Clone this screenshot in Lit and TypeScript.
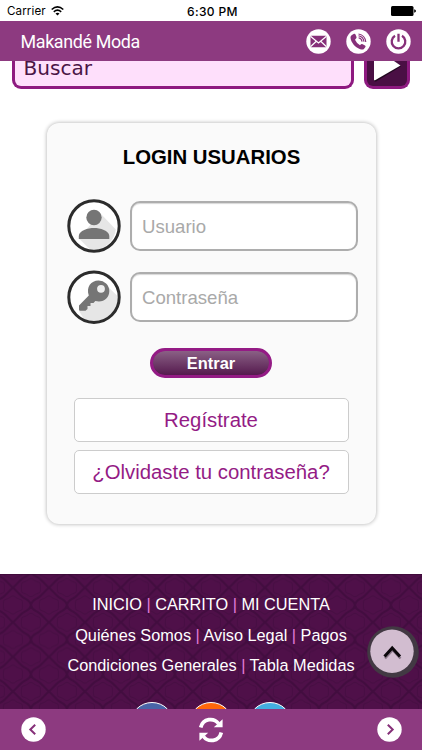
import { LitElement, html, css } from "lit";
import { customElement } from "lit/decorators.js";

@customElement("app-root")
export class AppRoot extends LitElement {
  static styles = css`
    * { box-sizing: border-box; }
    :host {
      display: flex; flex-direction: column; position: relative;
      width: 422px; height: 750px; overflow: hidden; background: #fff;
      font-family: "Liberation Sans", Arial, sans-serif; color: #000;
    }
    svg { display: block; flex: none; }
    .status {
      flex: none; height: 21px; display: grid; grid-template-columns: 1fr 1fr 1fr;
      align-items: center; padding: 0 6px 0 7px; font: 500 12px/21px Inter, sans-serif;
    }
    .carrier { display: flex; align-items: center; gap: 5px; font-weight: 400; font-size: 11.6px; letter-spacing: .1px; }
    .time { text-align: center; letter-spacing: .35px; white-space: nowrap; padding: 1px 0 0 2px; }
    .carrier span { padding-top: 1px; }
    .battery { justify-self: end; }
    .bar { flex: none; height: 40px; background: #8d3a80; display: flex; align-items: center; padding: 0 11px 0 20.5px; color: #fff; }
    .title { flex: 1; font: 400 17.9px/41px Roboto, sans-serif; letter-spacing: -.35px; }
    .tools { display: flex; gap: 15px; }
    .search { flex: none; height: 28px; display: flex; align-items: flex-start; padding: 0 12px; justify-content: space-between; }
    .query {
      width: 342px; height: 28px; border: 3px solid #8e1a80; border-top: 0; border-radius: 0 0 9px 9px;
      background: #fedffb; color: #4a1545; font: 20.1px/24px "DejaVu Sans", sans-serif; padding-left: 8.5px; overflow: hidden;
    }
    .query span { display: block; margin-top: -5px; }
    .go { width: 46px; height: 28px; border: 3px solid #8e1a80; border-top: 0; border-radius: 0 0 9px 9px; background: #4a0f44; }
    .card {
      flex: none; margin: 34px 46px 50px 47px; height: 401px; border-radius: 12px; background: #fafafa;
      box-shadow: 0 0 4px rgba(0,0,0,.33); display: flex; flex-direction: column; align-items: center;
    }
    h1 { margin: 22px 0 0; font-size: 20.35px; line-height: 24px; font-weight: 700; white-space: nowrap; }
    .row { display: flex; align-items: flex-start; gap: 9px; width: 291px; height: 55px; margin-left: 2px; }
    .row.user { margin-top: 30px; }
    .row.pass { margin-top: 16px; }
    .field {
      width: 227.5px; height: 50px; margin-top: 2px; border: 2px solid #adadad; border-radius: 10px; background: #fff;
      box-shadow: inset 0 1px 1px rgba(0,0,0,.16); color: #a9a9a9; font-size: 18.6px; line-height: 47px; padding-left: 10px;
    }
    .enter {
      width: 122px; height: 30px; margin: 23px 1px 0 0; border: 3px solid #941b85; border-radius: 15px;
      background: linear-gradient(#8a6085, #551a4e) padding-box, #941b85; color: #fff; font: 700 16.4px/25px "Liberation Sans", sans-serif;
      text-align: center;
    }
    .link {
      width: 275px; height: 44px; margin-right: 1px; border: 1px solid #ccc; border-radius: 5px; background: #fff;
      color: #941b85; font-size: 20.35px; line-height: 42px; text-align: center; white-space: nowrap;
    }
    .link.first { margin-top: 20px; }
    .link.second { margin-top: 8px; }
    .footer { flex: none; height: 135px; background: #4f1049; display: grid; overflow: hidden; }
    .footer > * { grid-area: 1 / 1; }
    .menu { display: flex; flex-direction: column; align-items: center; padding-top: 15px; color: #fff; font-size: 16.3px; line-height: 30.7px; white-space: nowrap; }
    .menu i { font-style: normal; color: #e07bd8; }
    .social { display: flex; justify-content: center; gap: 15px; margin-top: 20.5px; height: 22px; }
    .disc { width: 44px; height: 44px; flex: none; border: 1.5px solid #fff; border-radius: 50%; }
    .blue { background: #4964a8; } .orange { background: #ff670a; } .sky { background: #43aee0; }
    .nav { flex: none; height: 41px; background: #8d3a80; display: flex; align-items: center; justify-content: space-between; padding: 0 20.5px; }
    .top { position: absolute; left: 366px; top: 625px; }
  `;

  pattern() {
    return html`<svg width="422" height="135" viewBox="0 0 422 135">
      <defs>
        <pattern id="ogee" width="36" height="34.6" patternUnits="userSpaceOnUse" patternTransform="translate(12.9 -3.6)">
          <g fill="none" stroke="#350a35">
            <path d="M18 0C19 6 23 5 27 8.6S34 16 36 17.3C34 18.6 31 22.4 27 26S19 28.6 18 34.6C17 28.6 13 29.6 9 26S2 18.6 0 17.3C2 16 5 12.2 9 8.6S17 6 18 0Z" stroke-opacity=".5" stroke-width="2.2"/>
            <path d="M18 8.3C21 8.3 21 11 24.5 11.5S27.5 14.3 27.5 17.3 28 22.6 24.5 23.1 21 26.3 18 26.3 15 23.6 11.5 23.1 8.5 20.3 8.5 17.3 8 12 11.5 11.5 15 8.3 18 8.3ZM0 9C3 9 3 6.3 6.5 5.8S9.5 3 9.5 0M36 9C33 9 33 6.3 29.5 5.8S26.5 3 26.5 0M0 25.6C3 25.6 3 28.3 6.5 28.8S9.5 31.6 9.5 34.6M36 25.6C33 25.6 33 28.3 29.5 28.8S26.5 31.6 26.5 34.6" stroke-opacity=".3" stroke-width="1.2"/>
          </g>
        </pattern>
      </defs>
      <rect width="422" height="135" fill="url(#ogee)"/>
      <path d="M0 .5H422" stroke="#2d062a" stroke-opacity=".4"/>
    </svg>`;
  }

  render() {
    return html`
      <div class="status">
        <div class="carrier"><span>Carrier</span>
          <svg width="13" height="10" viewBox="0 0 13 10" fill="none" stroke="#000" stroke-width="1.6"><path d="M.7 3.5Q6.5-1.7 12.3 3.5M2.8 5.8Q6.5 2.6 10.2 5.8"/><path d="M6.5 9.5L4.5 7.4Q6.5 5.9 8.5 7.4Z" fill="#000" stroke="none"/></svg>
        </div>
        <div class="time">6:30 PM</div>
        <svg class="battery" width="25" height="10" viewBox="0 0 25 10"><rect width="22.5" height="10" rx="1.5"/><path d="M23.2 3.3Q25 3.8 25 5T23.2 6.7Z"/></svg>
      </div>
      <div class="bar">
        <div class="title">Makandé Moda</div>
        <div class="tools">
          <svg width="25" height="25" viewBox="0 0 25 25"><circle cx="12.5" cy="12.5" r="12.2" fill="#fff"/><rect x="4.5" y="6.7" width="16" height="11.6" rx=".8" fill="#863079"/><path d="M4.5 7.2L12.5 14L20.5 7.2M4.5 17.8L10.3 12.2M20.5 17.8L14.7 12.2" fill="none" stroke="#fff" stroke-width="1.2"/></svg>
          <svg width="25" height="25" viewBox="0 0 25 25"><circle cx="12.5" cy="12.5" r="12.2" fill="#fff"/><path d="M5.6 6.2L8 4.7Q9 4.4 9.5 5.5L10.5 8Q10.8 9 9.8 9.8L9 10.7Q10.5 14.2 14 16.2L15 15.3Q15.8 14.7 16.7 15.2L19 16.5Q20 17.2 19.4 18.1L17.9 20Q16.7 21.1 14.2 20.2C8.8 18 5 13.4 4.5 8.7Q4.4 7 5.6 6.2Z" fill="#863079"/><path d="M12.6 8.7Q15.8 9.5 16.1 12.6M12.5 6.8Q17.4 7.7 18 12.8M12.5 5Q19 6 19.8 13" fill="none" stroke="#863079" stroke-width="1.1"/></svg>
          <svg width="25" height="25" viewBox="0 0 25 25"><circle cx="12.5" cy="12.5" r="12.2" fill="#fff"/><path d="M9 6.8A6.8 6.8 0 1 0 16 6.8M12.5 4.7V12.7" fill="none" stroke="#863079" stroke-width="2.3"/></svg>
        </div>
      </div>
      <div class="search">
        <div class="query"><span>Buscar</span></div>
        <div class="go"><svg width="40" height="25" viewBox="0 0 40 25"><path d="M8 0H27L34 5.5L9 20.5Q7 21 7 19V0Z" fill="#220720"/><path d="M7 0H27L33.5 4.5L8 19.3Q7 19.6 7 18.5Z" fill="#fff"/></svg></div>
      </div>
      <div class="card">
        <h1>LOGIN USUARIOS</h1>
        <div class="row user">
          <svg width="54" height="55" viewBox="0 0 54 55"><circle cx="27" cy="27" r="25.2" fill="#fff"/><path d="M33 14L48.8 30.5A23.5 23.5 0 0 1 31 50.5H23L12 39.5Z" fill="#e6e6e6"/><circle cx="27" cy="27" r="25.2" fill="none" stroke="#2c2c2c" stroke-width="3"/><circle cx="27" cy="18.5" r="7.7" fill="#757575"/><path d="M11.8 40V37C12 31.5 21 29 27 29S42.1 31.5 42.3 37V40Z" fill="#757575"/></svg>
          <div class="field">Usuario</div>
        </div>
        <div class="row pass">
          <svg width="54" height="55" viewBox="0 0 54 55"><circle cx="27" cy="27.2" r="25.2" fill="#fff"/><path d="M38 14L50.5 26A23.7 23.7 0 0 1 17 49L12 41Z" fill="#e6e6e6"/><circle cx="27" cy="27.2" r="25.2" fill="none" stroke="#2c2c2c" stroke-width="3"/><path d="M21.8 25.5C19 17 24 10.5 31.5 10.5A10.6 10.6 0 0 1 42.3 21C42.3 28.5 36 33 28.3 31L26.5 33H23.5V36H20.5V39L18.5 40.8H13Q12 40.8 12 39.5V35.5Z" fill="#757575"/><circle cx="34" cy="18.8" r="3.9" fill="#eee"/></svg>
          <div class="field">Contraseña</div>
        </div>
        <div class="enter">Entrar</div>
        <div class="link first">Regístrate</div>
        <div class="link second">¿Olvidaste tu contraseña?</div>
      </div>
      <div class="footer">
        ${this.pattern()}
        <div class="menu">
          <div>INICIO <i>|</i> CARRITO <i>|</i> MI CUENTA</div>
          <div>Quiénes Somos <i>|</i> Aviso Legal <i>|</i> Pagos</div>
          <div>Condiciones Generales <i>|</i> Tabla Medidas</div>
          <div class="social"><div class="disc blue"></div><div class="disc orange"></div><div class="disc sky"></div></div>
        </div>
      </div>
      <div class="nav">
        <svg width="25" height="25" viewBox="0 0 25 25"><circle cx="12.5" cy="12.5" r="12.2" fill="#fff"/><path d="M14.2 7.7L9.3 12.5L14.2 17.3" fill="none" stroke="#863079" stroke-width="2"/></svg>
        <svg width="26" height="26" viewBox="0 0 26 26"><path d="M2.7 10.5C5 1 16 .5 20.5 6.5M23.3 15.5C21 25 10 25.5 5.5 19.5" fill="none" stroke="#fff" stroke-width="3.7"/><path d="M24.6 2.2V10.2H15.8ZM1.4 23.8V15.8H10.2Z" fill="#fff"/></svg>
        <svg width="25" height="25" viewBox="0 0 25 25"><circle cx="12.5" cy="12.5" r="12.2" fill="#fff"/><path d="M10.8 7.7L15.7 12.5L10.8 17.3" fill="none" stroke="#863079" stroke-width="2"/></svg>
      </div>
      <svg class="top" width="54" height="54" viewBox="0 0 54 54"><circle cx="27" cy="27" r="25.8" fill="#423943"/><circle cx="26" cy="26.2" r="21.7" fill="#d2bdd0"/><path d="M19 33.5L26.7 25L34.5 33.5" fill="none" stroke="#8b798a" stroke-width="2.5"/><path d="M18.5 31.5L26.2 23L34 31.5" fill="none" stroke="#0b070b" stroke-width="3"/></svg>
    `;
  }
}
